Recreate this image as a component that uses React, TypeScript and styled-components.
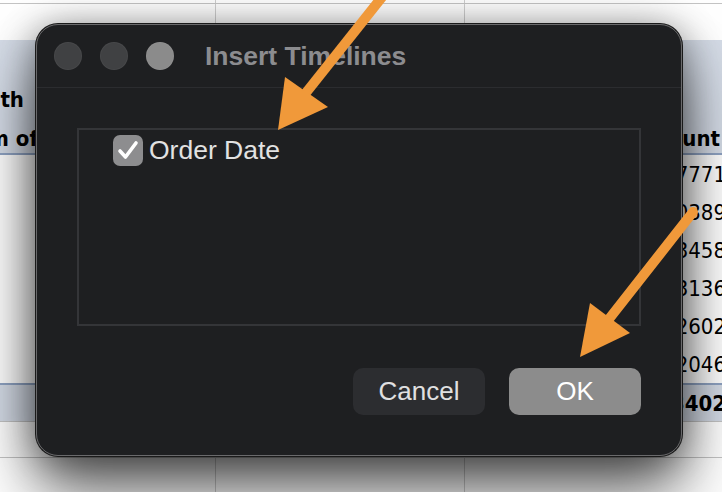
import React from 'react';
import styled, { createGlobalStyle } from 'styled-components';

const GlobalStyle = createGlobalStyle`
  html, body {
    margin: 0;
    padding: 0;
    background: #ffffff;
    overflow: hidden;
  }
`;

const Page = styled.div`
  position: relative;
  width: 722px;
  height: 492px;
  overflow: hidden;
  background: #ffffff;
`;

// ---- spreadsheet behind the dialog ----

const Sheet = styled.div`
  margin-left: -60px;
  width: 790px;
  font-family: 'Liberation Sans Narrow', 'DejaVu Sans Condensed', 'Liberation Sans', sans-serif;
  font-size: 22px;
  color: #000;
`;

const Row = styled.div<{ $height: number; $band?: boolean; $lineTop?: boolean; $line?: 'grid' | 'blue' | 'none'; $bold?: boolean }>`
  display: grid;
  grid-template-columns: 276px 249px 265px;
  height: ${(p) => p.$height}px;
  background: ${(p) => (p.$band ? '#d5dce7' : '#ffffff')};
  border-top: ${(p) => (p.$lineTop ? '2px solid #8fa3c3' : 'none')};
  border-bottom: ${(p) =>
    p.$line === 'blue' ? '2px solid #8fa3c3' : p.$line === 'grid' ? '1px solid #c4c4c4' : 'none'};
  font-weight: ${(p) => (p.$bold ? 700 : 400)};
`;

const GridCell = styled.div<{ $divider?: boolean }>`
  border-right: ${(p) => (p.$divider ? '1px solid #cfcfcf' : 'none')};
`;

const HeaderCell = styled.div<{ $align?: 'left' | 'right' }>`
  display: flex;
  flex-direction: column;
  justify-content: flex-end;
  gap: 11px;
  padding: 0 10px 0 0;
  text-align: ${(p) => p.$align || 'left'};
  font-weight: 700;
  line-height: 28px;
  white-space: nowrap;
`;

const HeaderLine = styled.span<{ $indent?: number }>`
  padding-left: ${(p) => p.$indent || 0}px;
`;

const ValueCell = styled.div`
  display: flex;
  align-items: center;
  justify-content: flex-end;
  padding-right: 4px;
  white-space: nowrap;
`;

// ---- dialog ----

const Dialog = styled.div`
  position: absolute;
  left: 36px;
  top: 24px;
  width: 646px;
  box-sizing: border-box;
  background: #1e1f21;
  border: 1px solid #6a6a6c;
  border-radius: 22px;
  box-shadow: 0 0 0 1px #1a1a1a, 0 36px 64px rgba(0, 0, 0, 0.62), 0 4px 36px rgba(0, 0, 0, 0.42);
  font-family: 'Liberation Sans', Arial, sans-serif;
  display: flex;
  flex-direction: column;
  overflow: hidden;
`;

const TitleBar = styled.div`
  display: flex;
  align-items: center;
  gap: 18px;
  height: 62px;
  padding-left: 17px;
  border-bottom: 1px solid #2b2c2f;
`;

const Light = styled.span<{ $color: string }>`
  width: 28px;
  height: 28px;
  border-radius: 50%;
  background: ${(p) => p.$color};
  box-sizing: border-box;
  border: 1px solid rgba(255, 255, 255, 0.04);
`;

const Title = styled.div`
  margin-left: 13px;
  font-size: 26.5px;
  font-weight: 700;
  color: #8c8c8f;
  white-space: nowrap;
`;

const Body = styled.div`
  display: flex;
  flex-direction: column;
  padding: 40px;
`;

const ListBox = styled.div`
  height: 198px;
  box-sizing: border-box;
  border: 2px solid #343538;
  padding: 4px 34px;
`;

const CheckRow = styled.label`
  display: flex;
  align-items: center;
  gap: 6px;
  color: #e2e2e2;
  font-size: 26.5px;
  line-height: 32px;
`;

const CheckBox = styled.span`
  width: 30px;
  height: 31px;
  border-radius: 7px;
  background: #8d8d8f;
  display: flex;
  align-items: center;
  justify-content: center;
`;

const Buttons = styled.div`
  display: flex;
  justify-content: flex-end;
  gap: 24px;
  margin-top: 42px;
`;

const Button = styled.button<{ $primary?: boolean }>`
  width: 132px;
  height: 47px;
  border: none;
  border-radius: 10px;
  background: ${(p) => (p.$primary ? '#8c8c8c' : '#2c2d30')};
  color: ${(p) => (p.$primary ? '#ffffff' : '#e0e0e0')};
  font-family: 'Liberation Sans', Arial, sans-serif;
  font-size: 26px;
  padding: 0;
`;

const Annotations = styled.svg`
  position: absolute;
  left: 0;
  top: 0;
  pointer-events: none;
`;

const values = ['127771', '160389', '143458', '153136', '142602', '132046'];

const App: React.FC = () => {
  return (
    <Page>
      <GlobalStyle />
      <Sheet>
        <Row $height={3} $line="grid">
          <GridCell $divider />
          <GridCell $divider />
          <GridCell />
        </Row>
        <Row $height={36}>
          <GridCell $divider />
          <GridCell $divider />
          <GridCell />
        </Row>
        <Row $height={113} $band $line="blue">
          <HeaderCell>
            <HeaderLine $indent={13}>Month</HeaderLine>
            <HeaderLine $indent={20}>Sum of</HeaderLine>
          </HeaderCell>
          <HeaderCell />
          <HeaderCell $align="right">
            <HeaderLine>Amount</HeaderLine>
          </HeaderCell>
        </Row>
        {values.map((v) => (
          <Row key={v} $height={38}>
            <div />
            <div />
            <ValueCell>{v}</ValueCell>
          </Row>
        ))}
        <Row $height={36} $band $lineTop $line="grid" $bold>
          <div />
          <div />
          <ValueCell>863402</ValueCell>
        </Row>
        <Row $height={35} $line="grid">
          <GridCell $divider />
          <GridCell $divider />
          <GridCell />
        </Row>
        <Row $height={60}>
          <GridCell $divider />
          <GridCell $divider />
          <GridCell />
        </Row>
      </Sheet>

      <Dialog>
        <TitleBar>
          <Light $color="#404143" />
          <Light $color="#404143" />
          <Light $color="#8b8b8b" />
          <Title>Insert Timelines</Title>
        </TitleBar>
        <Body>
          <ListBox>
            <CheckRow>
              <CheckBox>
                <svg width="22" height="20" viewBox="0 0 22 20">
                  <path
                    d="M3 11 L8.5 17 L19 3"
                    fill="none"
                    stroke="#ffffff"
                    strokeWidth="3.6"
                    strokeLinecap="round"
                    strokeLinejoin="round"
                  />
                </svg>
              </CheckBox>
              Order Date
            </CheckRow>
          </ListBox>
          <Buttons>
            <Button>Cancel</Button>
            <Button $primary>OK</Button>
          </Buttons>
        </Body>
      </Dialog>

      <Annotations width="722" height="492" viewBox="0 0 722 492">
        <line x1="394" y1="-18" x2="305" y2="94" stroke="#f0993a" strokeWidth="10" />
        <polygon points="278,130 285,77 328,107" fill="#f0993a" />
        <line x1="693" y1="212" x2="609" y2="319" stroke="#f0993a" strokeWidth="10" strokeLinecap="round" />
        <polygon points="580,357 590,303 630,333" fill="#f0993a" />
      </Annotations>
    </Page>
  );
};

export default App;
